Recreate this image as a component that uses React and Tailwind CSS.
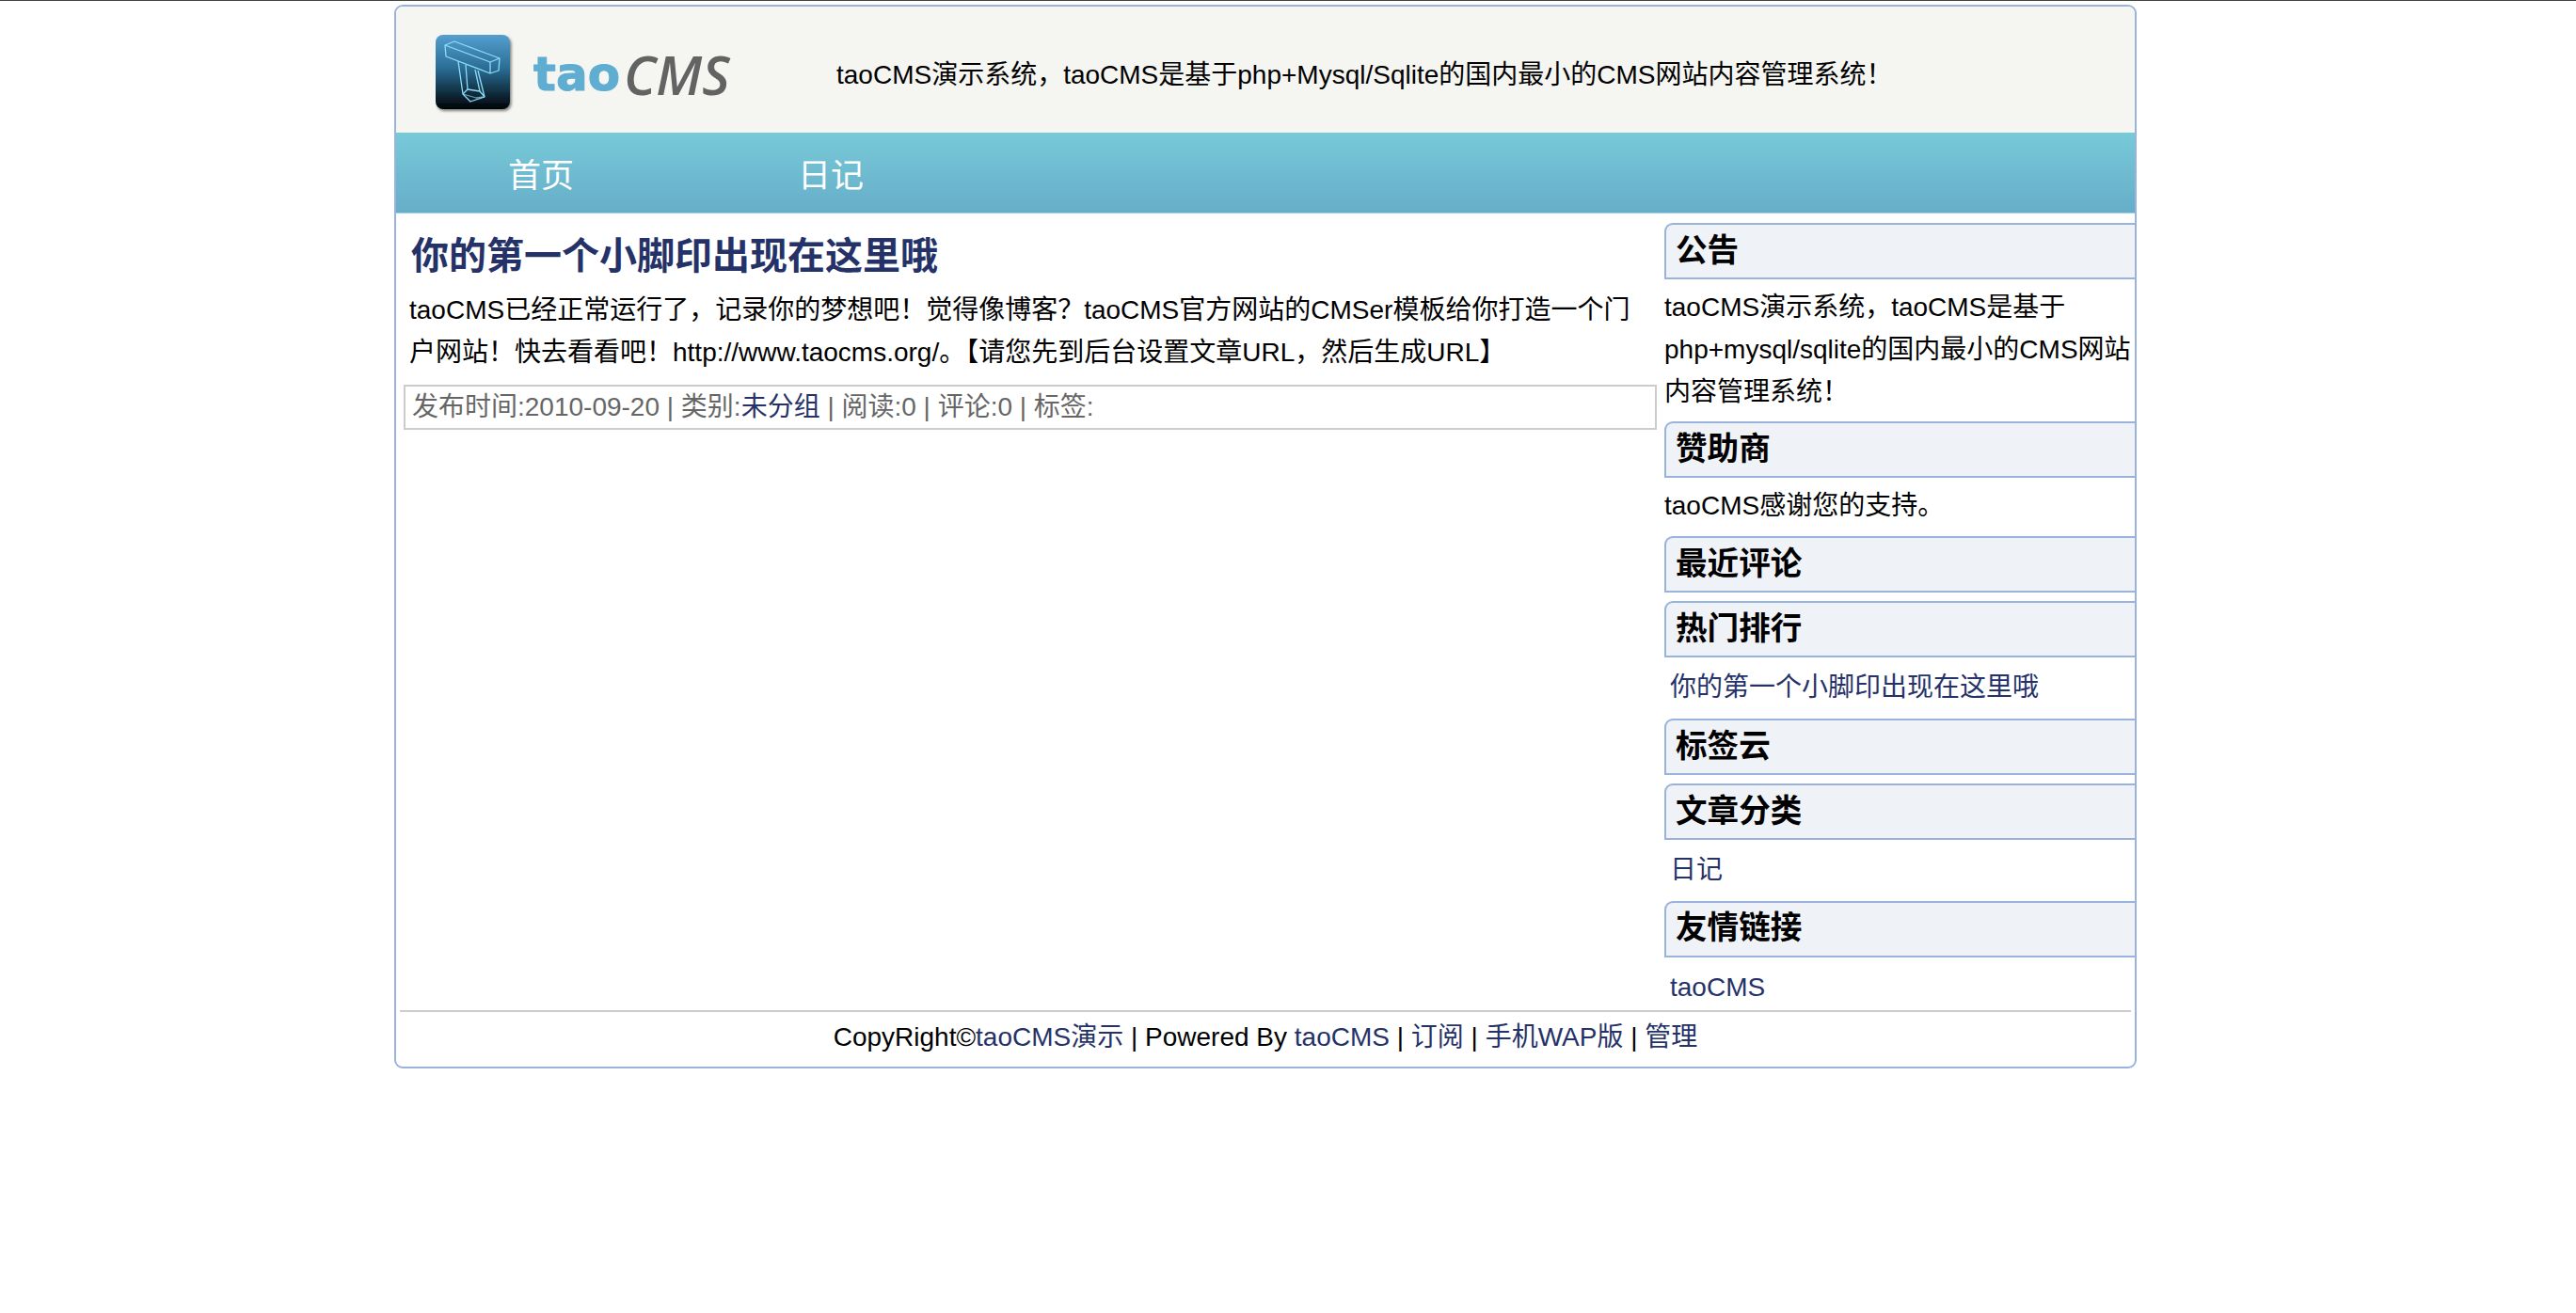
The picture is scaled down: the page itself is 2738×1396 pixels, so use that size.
import React from "react";

const SANS = "font-['Liberation_Sans','Noto_Sans_CJK_SC',sans-serif]";

const Logo = () => (
  <div className="flex items-center">
    <svg width="84" height="84" viewBox="0 0 84 84" className="shrink-0">
      <defs>
        <linearGradient id="tile" x1="0" y1="0" x2="0" y2="1">
          <stop offset="0" stopColor="#559fd0" />
          <stop offset="0.45" stopColor="#2a6d95" />
          <stop offset="1" stopColor="#000305" />
        </linearGradient>
        <filter id="soft" x="-10%" y="-10%" width="125%" height="125%">
          <feDropShadow dx="1.5" dy="2" stdDeviation="1.5" floodColor="#000" floodOpacity="0.5" />
        </filter>
      </defs>
      <rect x="0" y="0" width="79" height="79" rx="8" fill="url(#tile)" filter="url(#soft)" />
      <g fill="none" stroke="#8fdcf8" strokeWidth="1.3" strokeLinejoin="round">
        <path d="M10 11 L20 7 L68 25 L67 38 L58 41 L11 23 Z" />
        <path d="M10 11 L58 29 L68 25" />
        <path d="M58 29 L58 41" />
        <path d="M24 28 L29 63 L37 71 L52 66 L45 38" />
        <path d="M32 32 L34 58 L29 63" />
        <path d="M34 58 L47 60 L52 66" />
        <path d="M47 60 L42 37" />
        <path d="M29 63 L43 67 L52 66" opacity="0.7" />
      </g>
    </svg>
    <span className="ml-[20px] font-['DejaVu_Sans',sans-serif] font-bold text-[50px] leading-none text-[#5fadd1] [-webkit-text-stroke:1px_#5fadd1]">
      tao
    </span>
    <span className="ml-[4px] font-['Open_Sans',sans-serif] font-semibold italic text-[57px] leading-none text-[#636363]">
      CMS
    </span>
  </div>
);

const SideHead = ({ children }) => (
  <h3 className="h-[60px] pl-[10px] flex items-center text-[33.6px] font-bold text-black bg-[#eff2f7] border-2 border-r-0 border-[#9ab3dc] rounded-tl-[9px]">
    {children}
  </h3>
);

const Side = ({ title, children }) => (
  <section className="mb-[9px]">
    <SideHead>{title}</SideHead>
    {children}
  </section>
);

const A = ({ children }) => <a className="text-[#253268]">{children}</a>;

export default function App() {
  return (
    <div className={`${SANS} min-h-[1396px] bg-white border-t border-[#444444] text-[28px] leading-[44.8px] text-black`}>
      <div className="mt-[4px] ml-[419px] w-[1852px] border-2 border-[#9ab3dc] rounded-[9px] overflow-hidden">
        <header className="h-[134px] bg-[#f5f5f1] flex items-center pl-[42px] pt-[10px]">
          <div className="w-[426px]">
            <Logo />
          </div>
          <p className="mt-[2px]">taoCMS演示系统，taoCMS是基于php+Mysql/Sqlite的国内最小的CMS网站内容管理系统！</p>
        </header>

        <nav className="h-[86px] flex items-center pt-[7px] bg-gradient-to-b from-[#77cad8] to-[#67adc9] border-b border-[#9fd3e4] text-[35px] text-white">
          <a className="px-[119px]">首页</a>
          <a className="px-[119px]">日记</a>
        </nav>

        <div className="flex pt-[10px]">
          <main className="w-[1348px] shrink-0 px-[8px]">
            <h2 className="pl-[8px] pt-[8px] text-[40px] leading-[54px] font-bold text-[#253268]">
              你的第一个小脚印出现在这里哦
            </h2>
            <p className="px-[6px] mt-[9px]">
              taoCMS已经正常运行了，记录你的梦想吧！觉得像博客？taoCMS官方网站的CMSer模板给你打造一个门户网站！快去看看吧！http://www.taocms.org/。【请您先到后台设置文章URL，然后生成URL】
            </p>
            <div className="mt-[11px] h-[48px] border-2 border-[#cccccc] px-[7px] leading-[43px] text-[#666666]">
              发布时间:2010-09-20 | 类别:<A>未分组</A> | 阅读:0 | 评论:0 | 标签:
            </div>
          </main>

          <aside className="flex-1 min-w-0">
            <Side title="公告">
              <p className="pt-[8px]">taoCMS演示系统，taoCMS是基于php+mysql/sqlite的国内最小的CMS网站内容管理系统！</p>
            </Side>
            <Side title="赞助商">
              <p className="pt-[8px]">taoCMS感谢您的支持。</p>
            </Side>
            <Side title="最近评论" />
            <Side title="热门排行">
              <div className="pt-[10px] pb-[1px] pl-[6px]"><A>你的第一个小脚印出现在这里哦</A></div>
            </Side>
            <Side title="标签云" />
            <Side title="文章分类">
              <div className="pt-[10px] pb-[1px] pl-[6px]"><A>日记</A></div>
            </Side>
            <section>
              <SideHead>友情链接</SideHead>
              <div className="pt-[10px] pb-[1px] pl-[6px]"><A>taoCMS</A></div>
            </section>
          </aside>
        </div>

        <footer className="mx-[4px] border-t-2 border-[#cccccc] pt-[5px] h-[60px] text-center">
          CopyRight©<A>taoCMS演示</A> | Powered By <A>taoCMS</A> | <A>订阅</A> | <A>手机WAP版</A> | <A>管理</A>
        </footer>
      </div>
    </div>
  );
}
